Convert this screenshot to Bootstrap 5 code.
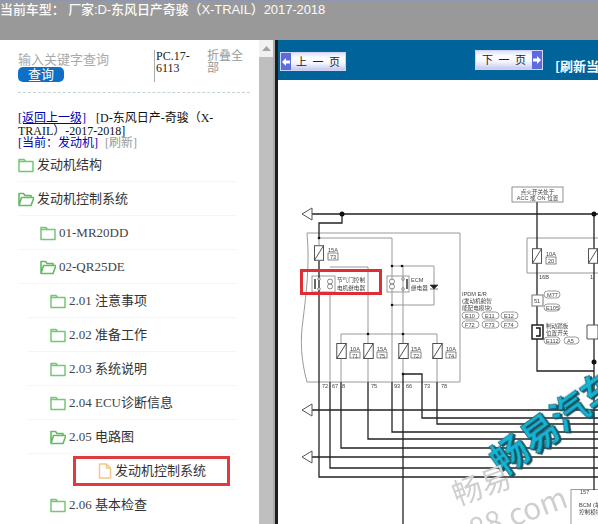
<!DOCTYPE html>
<html lang="zh"><head><meta charset="utf-8"><title>电路图</title>
<link href="https://cdn.jsdelivr.net/npm/bootstrap@5.3.0/dist/css/bootstrap.min.css" rel="stylesheet">
<style>
html,body{height:524px;overflow:hidden;background:#fff}
body{font-family:"Liberation Serif","Noto Sans CJK SC",serif;font-size:13px;color:#333}
.cap-bar{height:40px;background:#999;border-top:1px solid #8f96b0;color:#fbfbfb;font-family:"Liberation Sans","Noto Sans CJK SC",sans-serif;font-size:13px;line-height:15px;padding-top:1px;font-weight:500;white-space:nowrap;letter-spacing:-.08px}
.stage{height:484px}
.side-pane{width:259px;padding:10px 0 0 18px;overflow:hidden;flex:none}
.search-row{border-bottom:1px dashed #c5d2d8;width:232px;height:42px;box-sizing:content-box}
.search-box{width:136px;color:#aaa;font-size:13px;line-height:15px;padding-top:2px}
.find-btn{display:block;width:46px;height:15px;background:#0d6fc6;color:#fff;border-radius:5px;font-size:13px;line-height:15px;text-align:center}
.code-cell{width:53px;border-left:1px solid #aaa;padding-left:1px;font-size:12px;line-height:12px;height:32px;color:#222}
.fold-cell{width:37px;color:#999;font-size:12px;line-height:12px}
.crumbs{margin-top:19px;font-size:12px;line-height:12.5px;color:#111;width:205px;height:36px}
.crumbs a{color:#0000b0;text-decoration:underline;margin-right:7px}
.crumbs .cur{color:#0000b0}
.crumbs .ref{color:#999;margin-left:4px}
.tree-list{width:219px}
.tree-row{height:34px;background:none;border:0;border-bottom:2px solid #f6f6f6;padding:0;display:flex;align-items:center;color:#333;font-size:13px;white-space:nowrap}
.lv1{padding-left:0}
.lv2{padding-left:22px}
.lv3{margin-left:10px;width:209px;padding-left:22px}
.lv4{margin-left:10px;padding-left:70px;width:209px;border-bottom:0}
.tree-row svg{flex:none;margin-right:3px}
.tree-row .num{color:#444;font-size:13px}
.pick-box{position:absolute;left:73px;top:416px;width:157px;height:30px;border:3px solid #de3a3f;pointer-events:none}
.side-wrap{position:relative}
.fake-scroll{width:16px;background:#f1f1f1;flex:none;border-right:2px solid #ababab}
.fake-scroll .arr{height:17px;display:flex;justify-content:center;align-items:center}
.fake-scroll .thumb{height:467px;background:#bfbfbf}
.split-line{width:3px;background:#1d1d1d;flex:none}
.doc-pane{min-width:0;overflow:hidden}
.page-bar{height:40px;background:#00639a;color:#fff;white-space:nowrap}
.pg-btn{display:flex;flex:none;height:19px;width:66px;border:1px solid #cfd4f5;background:linear-gradient(#dfe2fb,#fff 30%,#f4f5fe 60%,#c4c9ef);color:#222;font-size:11px;font-family:"Noto Sans CJK SC",sans-serif;line-height:17px;word-spacing:3px}
.pg-btn .cap{width:10px;background:#5c6cdc;flex:none;display:flex;align-items:center;justify-content:center}
.pg-btn .lab{flex:1;text-align:center}
.prev-slot{margin:12px 0 0 2px}
.next-slot{margin:10px 0 0 129px;height:20px;width:68px}
.refresh-lab{margin:18px 0 0 12px;font-size:13px;font-weight:700;font-family:"Noto Sans CJK SC",sans-serif;line-height:16px}
.plan{display:block;width:320px;height:444px;filter:blur(.45px)}
.plan text{font-family:"Liberation Sans","Noto Sans CJK SC",sans-serif;font-size:5.6px;fill:#444}
.plan .wm-a{font-size:37px;font-weight:700;fill:#14b4d4;stroke:#14525f;stroke-width:.7px;font-family:"Noto Sans CJK SC",sans-serif;filter:drop-shadow(1.5px 2px 0 #17505c)}
.plan .wm-b{font-size:30px;fill:#cfcfcf;font-family:"Noto Sans CJK SC",sans-serif}
.plan .wm-c{font-size:30px;fill:#cfcfcf;font-family:"Noto Sans CJK SC",sans-serif}
.k{stroke:#222;stroke-width:1.3;fill:none}
.g{stroke:#999;stroke-width:1;fill:none}
.t{stroke:#555;stroke-width:.7;fill:#fff}
.mark-red{fill:none;stroke:#de2e33;stroke-width:3}
</style></head><body>
<svg width="0" height="0" class="position-absolute"><defs>
<symbol id="fc" viewBox="0 0 16 16"><path d="M1 14.500V2.500h5l1.500 2h7.500v10z M1 4.500h6.500" fill="#fff" stroke="#74c874" stroke-width="1.500" stroke-linejoin="round"/></symbol>
<symbol id="fo" viewBox="0 0 16 16"><path d="M1 14.500V2.500h4.500l1.500 2h6v2.500 M1 14.500l2.500-8H16l-3 8z" fill="#fff" stroke="#62bb62" stroke-width="1.600" stroke-linejoin="round"/></symbol>
<symbol id="fl" viewBox="0 0 14 16"><path d="M1.500 1h7l4 4v10h-11z M8.500 1v4h4" fill="#fff" stroke="#f3c68c" stroke-width="1.500" stroke-linejoin="round"/></symbol>
<symbol id="fu" viewBox="0 0 11 17"><rect x=".5" y=".5" width="10" height="16" fill="#fff" stroke="#444"/><path d="M.5 16.500 10.500 .5" stroke="#444"/></symbol>
</defs></svg>
<div class="cap-bar"><span class="ms-n1">当前车型： 厂家:D-东风日产奇骏（X-TRAIL）2017-2018</span></div>
<div class="stage d-flex">
<div class="side-pane side-wrap">
  <div class="search-row d-flex">
    <div class="search-box">输入关键字查询<span class="find-btn">查询</span></div>
    <div class="code-cell">PC.17-6113</div>
    <div class="fold-cell">折叠全部</div>
  </div>
  <div class="crumbs"><a href="#">[返回上一级]</a> [D-东风日产-奇骏（X-TRAIL）-2017-2018]<br><span class="cur">[当前：发动机]</span> <span class="ref">[刷新]</span></div>
  <div class="list-group list-group-flush tree-list">
    <div class="list-group-item tree-row lv1"><svg width="16" height="16"><use href="#fc"/></svg>发动机结构</div>
    <div class="list-group-item tree-row lv1"><svg width="16" height="16"><use href="#fo"/></svg>发动机控制系统</div>
    <div class="list-group-item tree-row lv2"><svg width="16" height="16"><use href="#fc"/></svg><span class="num">01-MR20DD</span></div>
    <div class="list-group-item tree-row lv2"><svg width="16" height="16"><use href="#fo"/></svg><span class="num">02-QR25DE</span></div>
    <div class="list-group-item tree-row lv3"><svg width="16" height="16"><use href="#fc"/></svg><span class="num">2.01&nbsp;</span>注意事项</div>
    <div class="list-group-item tree-row lv3"><svg width="16" height="16"><use href="#fc"/></svg><span class="num">2.02&nbsp;</span>准备工作</div>
    <div class="list-group-item tree-row lv3"><svg width="16" height="16"><use href="#fc"/></svg><span class="num">2.03&nbsp;</span>系统说明</div>
    <div class="list-group-item tree-row lv3"><svg width="16" height="16"><use href="#fc"/></svg><span class="num">2.04 ECU</span>诊断信息</div>
    <div class="list-group-item tree-row lv3"><svg width="16" height="16"><use href="#fo"/></svg><span class="num">2.05&nbsp;</span>电路图</div>
    <div class="list-group-item tree-row lv4"><svg width="14" height="16"><use href="#fl"/></svg>发动机控制系统</div>
    <div class="list-group-item tree-row lv3"><svg width="16" height="16"><use href="#fc"/></svg><span class="num">2.06&nbsp;</span>基本检查</div>
  </div>
  <div class="pick-box"></div>
</div>
<div class="fake-scroll"><div class="arr"><svg width="9" height="5"><path d="M0 5 4.500 0 9 5z" fill="#a3a3a3"/></svg></div><div class="thumb"></div></div>
<div class="split-line"></div>
<div class="doc-pane flex-grow-1">
  <div class="page-bar d-flex">
    <div class="pg-btn prev-slot"><span class="cap"><svg width="8" height="8"><path d="M0 4 4 0v2.500h4v3H4V8z" fill="#fff"/></svg></span><span class="lab">上 一 页</span></div>
    <div class="pg-btn next-slot"><span class="lab">下 一 页</span><span class="cap"><svg width="8" height="8"><path d="M8 4 4 0v2.500H0v3h4V8z" fill="#fff"/></svg></span></div>
    <div class="refresh-lab">[刷新当前页面]</div>
  </div>
  <svg class="plan" viewBox="278 80 320 444" role="img" aria-label="电路图">
    <path class="g" d="M307 233H460V382H307C301 360 300 340 303 320C306 295 310 265 307 233Z"/>
    <path class="g" d="M527 238H598M527 238V273H598"/>
    <path class="g" d="M319 238H392V382M330 267H368V334M330 292V382M341 334H437M341 334V343M368 334V343M403 334V343M437 334V343M341 359V382M368 359V382M437 359V382M392 266H434V305H392"/>
    <rect class="g" x="312" y="276" width="23" height="16"/>
    <rect class="g" x="387" y="276" width="22" height="16"/>
    <rect class="g" x="571" y="489.500" width="40" height="50"/>
    <path class="g" d="M403 266V374"/>
    <path class="k" d="M311 214H598M342 214V223H319V238M319 261V477H598M330 382V468H598M341 382V448H598M368 382V439H598M392 382V432H598M437 382V424H598M403 374V524M403 374H422V418H598M311 410H598M311 457H598M537 202V371H594M594 214V490"/>
    <path class="g" d="M319 238V245"/>
    <path d="M302 214 312 208V220Z" fill="#fff" stroke="#555"/>
    <path d="M302 410 312 404V416Z" fill="#fff" stroke="#555"/>
    <path d="M302 457 312 451V463Z" fill="#fff" stroke="#555"/>
    <g fill="#111"><circle cx="342" cy="214" r="2.500"/><circle cx="594" cy="214" r="2.500"/><circle cx="594" cy="362" r="2.500"/><circle cx="319" cy="238" r="1.300"/><circle cx="392" cy="266" r="1.300"/><circle cx="402" cy="266" r="1.300"/><circle cx="392" cy="305" r="1.300"/><circle cx="368" cy="334" r="1.300"/><circle cx="403" cy="334" r="1.300"/><circle cx="403" cy="374" r="1.300"/></g>
    <use href="#fu" x="314" y="245" width="10" height="16"/>
    <use href="#fu" x="336" y="343" width="11" height="16"/>
    <use href="#fu" x="363" y="343" width="11" height="16"/>
    <use href="#fu" x="398" y="343" width="11" height="16"/>
    <use href="#fu" x="432" y="343" width="11" height="16"/>
    <use href="#fu" x="532" y="248" width="10" height="16"/>
    <use href="#fu" x="588" y="248" width="10" height="16"/>
    <text x="328" y="252">15A</text><rect class="t" x="328" y="253" width="10" height="7"/><text x="330" y="259">73</text>
    <text x="350" y="351">10A</text><rect class="t" x="350" y="352" width="10" height="6"/><text x="352" y="357.500">71</text>
    <text x="377" y="351">15A</text><rect class="t" x="377" y="352" width="10" height="6"/><text x="379" y="357.500">75</text>
    <text x="411" y="351">15A</text><rect class="t" x="411" y="352" width="10" height="6"/><text x="413" y="357.500">72</text>
    <text x="446" y="351">10A</text><rect class="t" x="446" y="352" width="10" height="6"/><text x="448" y="357.500">74</text>
    <text x="546" y="256">10A</text><rect class="t" x="546" y="257" width="10" height="7"/><text x="548" y="263">20</text>
    <path d="M315 279V289" stroke="#333" stroke-width="1.500"/><g fill="#fff" stroke="#555" stroke-width=".7"><circle cx="319" cy="279" r="1.300"/><circle cx="319" cy="289" r="1.300"/><circle cx="330" cy="281.500" r="2.500"/><circle cx="330" cy="286.500" r="2.500"/><circle cx="392" cy="281.500" r="2.500"/><circle cx="392" cy="286.500" r="2.500"/><circle cx="403" cy="279" r="1.300"/><circle cx="403" cy="289" r="1.300"/></g><path d="M407 279V289" stroke="#333" stroke-width="1.500"/>
    <path d="M430 285h8l-4 4zM430 289h8" fill="#222" stroke="#222" stroke-width=".6"/>
    <text x="337" y="282">节气门控制</text><text x="337" y="289.500">电机继电器</text>
    <text x="411" y="282">ECM</text><text x="411" y="289.500">继电器</text>
    <rect class="mark-red" x="301.500" y="270.500" width="79" height="23"/>
    <text x="462" y="296">IPDM E/R</text><text x="462" y="303">(发动机舱智</text><text x="462" y="310">能配电模块)</text>
    <g class="g"><rect x="462" y="312" width="17" height="7" rx="3.500"/><rect x="482" y="312" width="17" height="7" rx="3.500"/><rect x="501" y="312" width="17" height="7" rx="3.500"/><rect x="462" y="321" width="17" height="7" rx="3.500"/><rect x="482" y="321" width="17" height="7" rx="3.500"/><rect x="501" y="321" width="17" height="7" rx="3.500"/><rect x="544" y="291" width="16" height="7" rx="3.500"/><rect x="544" y="304" width="16" height="7" rx="3.500"/><rect x="544" y="337" width="16" height="7" rx="3.500"/><rect x="564" y="337" width="15" height="7" rx="3.500"/></g>
    <text x="465" y="318">E10</text><text x="485" y="318">E11</text><text x="504" y="318">E12</text><text x="465" y="327">F72</text><text x="485" y="327">F73</text><text x="504" y="327">F74</text>
    <text x="547" y="297">M77</text><text x="546" y="310">E105</text><text x="546" y="343">E112</text><text x="567" y="343">A5</text>
    <rect x="512" y="187" width="51" height="15" fill="#fff" stroke="#777" stroke-width=".8"/>
    <text x="537.500" y="193.500" text-anchor="middle">点火开关处于</text><text x="537.500" y="200" text-anchor="middle">ACC 或 ON 位置</text>
    <text x="539" y="279">16B</text><text x="590" y="279">1</text>
    <rect x="532" y="295" width="11" height="11" fill="#fff" stroke="#777"/><text x="534" y="303">51</text>
    <path d="M532 325h11v14h-11z" fill="#fff" stroke="#222" stroke-width="1.500"/><path d="M536 328h4v8h-4" fill="none" stroke="#111" stroke-width="1.500"/>
    <path d="M587 325h11v14h-11z" fill="#fff" stroke="#555"/>
    <text x="546" y="328">制动踏板</text><text x="546" y="335">位置开关</text>
    <text x="322" y="388">72</text><text x="332" y="388">67</text><text x="342" y="388">8</text><text x="371" y="388">75</text><text x="394" y="388">93</text><text x="406" y="388">66</text><text x="424" y="388">73</text><text x="441" y="388">78</text>
    <text x="580" y="494">157</text><text x="579" y="507">BCM (车</text><text x="579" y="514">控制模块</text>
    <text class="wm-a" transform="translate(503 477) rotate(-36)">畅易汽车</text>
    <text class="wm-b" transform="translate(457 506) rotate(-20)">畅易</text>
    <text class="wm-c" transform="translate(474 541) rotate(-20)">88.com</text>
  </svg>
</div>
</div>
</body></html>
